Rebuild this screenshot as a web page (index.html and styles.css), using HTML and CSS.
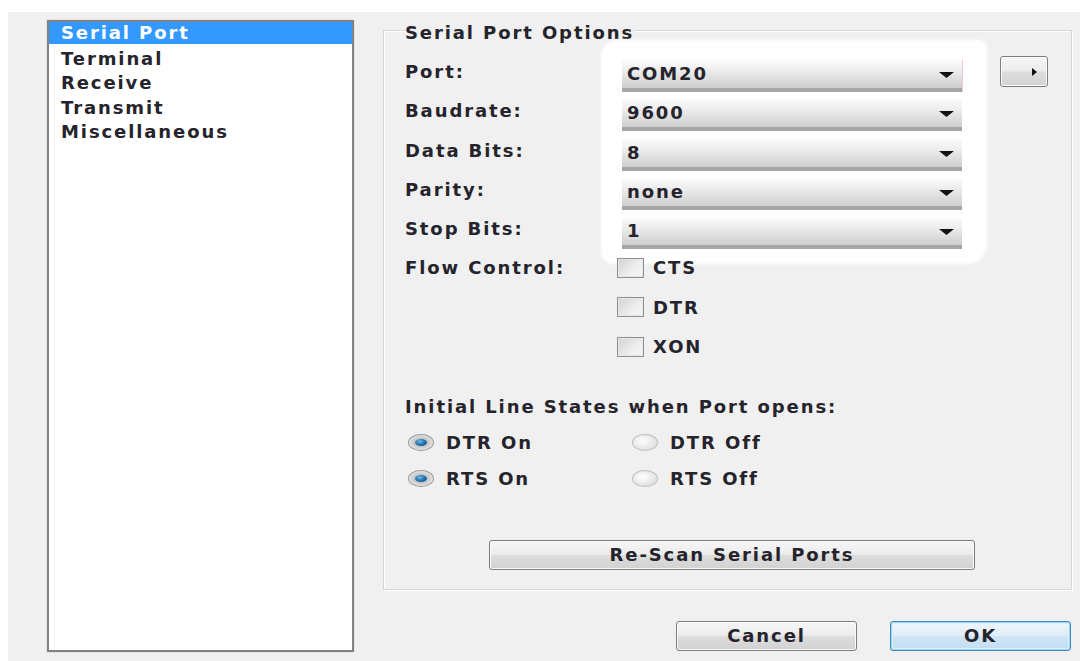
FILE: index.html
```html
<!DOCTYPE html>
<html lang="en">
<head>
<meta charset="utf-8">
<title>Settings</title>
<link rel="stylesheet" href="styles.css">
</head>
<body>
<div class="dialog">
  <ul class="pages">
    <li class="selected">Serial Port</li>
    <li>Terminal</li>
    <li>Receive</li>
    <li>Transmit</li>
    <li>Miscellaneous</li>
  </ul>

  <div class="main">
    <section class="group">
      <div class="group-title">Serial Port Options</div>

      <div class="form">
        <div class="labels">
          <div class="lbl">Port:</div>
          <div class="lbl">Baudrate:</div>
          <div class="lbl">Data Bits:</div>
          <div class="lbl">Parity:</div>
          <div class="lbl">Stop Bits:</div>
          <div class="lbl">Flow Control:</div>
        </div>

        <div class="fields">
          <div class="combos">
            <div class="row"><div class="combo first"><span>COM20</span><svg class="drop" width="15" height="6" viewBox="0 0 15 6"><path d="M0 0H15L7.5 6Z"/></svg></div></div>
            <div class="row"><div class="combo"><span>9600</span><svg class="drop" width="15" height="6" viewBox="0 0 15 6"><path d="M0 0H15L7.5 6Z"/></svg></div></div>
            <div class="row"><div class="combo"><span>8</span><svg class="drop" width="15" height="6" viewBox="0 0 15 6"><path d="M0 0H15L7.5 6Z"/></svg></div></div>
            <div class="row"><div class="combo"><span>none</span><svg class="drop" width="15" height="6" viewBox="0 0 15 6"><path d="M0 0H15L7.5 6Z"/></svg></div></div>
            <div class="row"><div class="combo"><span>1</span><svg class="drop" width="15" height="6" viewBox="0 0 15 6"><path d="M0 0H15L7.5 6Z"/></svg></div></div>
          </div>
          <div class="checks">
            <div class="row check"><span class="box"></span>CTS</div>
            <div class="row check"><span class="box"></span>DTR</div>
            <div class="row check"><span class="box"></span>XON</div>
          </div>
        </div>

        <div class="side">
          <button class="btn more" type="button"><svg width="5" height="8" viewBox="0 0 5 8"><path d="M0 0L5 4L0 8Z"/></svg></button>
        </div>
      </div>

      <div class="subtitle">Initial Line States when Port opens:</div>
      <div class="radios">
        <div class="radio-item"><span class="radio on"></span>DTR On</div>
        <div class="radio-item"><span class="radio"></span>DTR Off</div>
        <div class="radio-item"><span class="radio on"></span>RTS On</div>
        <div class="radio-item"><span class="radio"></span>RTS Off</div>
      </div>

      <button class="btn rescan" type="button">Re-Scan Serial Ports</button>
    </section>

    <div class="actions">
      <button class="btn action" type="button">Cancel</button>
      <button class="btn action default" type="button">OK</button>
    </div>
  </div>
</div>
</body>
</html>
```

FILE: styles.css
```css
html, body {
  margin: 0;
  background: #ffffff;
}

body {
  font-family: "DejaVu Sans", "Open Sans", sans-serif;
  font-weight: 700;
  font-size: 18px;
  letter-spacing: 1.9px;
  color: #25232b;
}

/* dialog surface */
.dialog {
  margin: 12px 0 0 8px;
  height: 649px;
  box-sizing: border-box;
  padding: 8px 8px 0 39px;
  background: #f0f0f0;
  display: flex;
  gap: 29px;
}

/* page list on the left */
.pages {
  list-style: none;
  margin: 0;
  padding: 0;
  width: 307px;
  height: 632px;
  box-sizing: border-box;
  border: 2px solid #828282;
  background: #ffffff;
  box-shadow: 0 0 1px #a8a8a8;
  flex: none;
}

.pages li {
  height: 24.5px;
  line-height: 23px;
  padding-left: 12px;
}

.pages li.selected {
  background: #3399ff;
  color: #ffffff;
  height: 22px;
  margin-bottom: 2.5px;
  line-height: 22px;
}

/* right column */
.main {
  width: 689px;
  display: flex;
  flex-direction: column;
  flex: none;
}

.group {
  margin-top: 10px;
  height: 560px;
  box-sizing: border-box;
  border: 1px solid #d6d6d6;
  box-shadow: inset 1px 1px 0 #ffffff, 1px 1px 0 #ffffff;
  padding: 0 0 19px 21px;
  display: flex;
  flex-direction: column;
  align-items: flex-start;
}

.group-title {
  margin-top: -10px;
  line-height: 24px;
  padding: 0 1px;
  margin-left: -1px;
  background: #f0f0f0;
}

.form {
  margin-top: 7px;
  display: flex;
}

.labels {
  width: 217px;
}

.lbl,
.row {
  height: 39.3px;
  line-height: 39.3px;
  box-sizing: border-box;
}

.fields {
  width: 340px;
}

/* white patch painted behind the drop-downs */
.combos {
  margin: -10px -23px -14px -19px;
  padding: 10px 23px 14px 19px;
  background: #ffffff;
  border-radius: 14px 6px 18px 10px;
  box-shadow: 0 0 3px 2px #ffffff;
}

.combos .row {
  padding-top: 8px;
}

.combo {
  height: 32px;
  box-sizing: border-box;
  padding: 2px 8px 0 5px;
  line-height: 24px;
  display: flex;
  justify-content: space-between;
  align-items: flex-start;
  background: linear-gradient(#fbfbfb, #eeeeee 35%, #dadada 75%, #cfcfcf);
  border-bottom: 4px solid #a6a6a6;
}

.combo.first {
  box-shadow: 1px 0 0 #f1c9c9;
}

.drop {
  margin-top: 10px;
  fill: #111111;
}

.checks {
  margin-left: -5px;
}

.check {
  display: flex;
  align-items: center;
  gap: 9px;
}

.box {
  width: 27px;
  height: 20px;
  box-sizing: border-box;
  border: 1px solid #8f8f8f;
  background: linear-gradient(135deg, #d2d2d2, #eeeeee 60%, #f7f7f7);
  box-shadow: inset 0 0 0 1px #e6e6e6;
}

.side {
  margin-left: 38px;
}

.btn {
  font: inherit;
  letter-spacing: inherit;
  color: inherit;
  border: 1px solid #7d7d7d;
  border-radius: 3px;
  background: linear-gradient(#f6f6f6, #ececec 48%, #dddddd 52%, #d2d2d2);
  box-shadow: inset 0 0 0 1px #fbfbfb;
  padding: 0;
  line-height: 26px;
}

.more {
  margin-top: 4px;
  width: 48px;
  height: 31px;
  display: flex;
  align-items: center;
  justify-content: flex-end;
  padding-right: 10px;
  box-sizing: border-box;
}

.more svg {
  fill: #111111;
}

.subtitle {
  margin-top: 29px;
  line-height: 24px;
}

.radios {
  margin-top: 5px;
  margin-left: 3px;
  display: grid;
  grid-template-columns: 224px auto;
  grid-auto-rows: 36px;
}

.radio-item {
  display: flex;
  align-items: center;
  gap: 12px;
}

.radio {
  position: relative;
  width: 26px;
  height: 17px;
  box-sizing: border-box;
  border-radius: 50%;
  border: 1px solid #bdbdbd;
  background: radial-gradient(ellipse at 40% 40%, #ffffff, #e2e2e2 70%, #d0d0d0);
}

.radio.on {
  border-color: #9a9a9a;
  background: radial-gradient(ellipse, #c6c6c6 40%, #e8e8e8 75%, #f2f2f2);
}

.radio.on::after {
  content: "";
  position: absolute;
  left: 6px;
  top: 4px;
  width: 12px;
  height: 7px;
  border-radius: 50%;
  background: radial-gradient(ellipse at 40% 35%, #6fb6e6, #1b6aa8 55%, #0f4678);
}

.rescan {
  margin-top: auto;
  margin-left: 84px;
  width: 486px;
  height: 30px;
}

.actions {
  margin-top: 31px;
  display: flex;
  justify-content: flex-end;
  gap: 33px;
  padding-right: 1px;
}

.action {
  width: 181px;
  height: 30px;
}

.default {
  border-color: #3c8bc4;
  background: linear-gradient(#eef6fc, #e0eef8 48%, #cfe5f4 52%, #c3def2);
  box-shadow: inset 0 0 0 1px #9fd4f5, inset 0 0 0 2px #d9effc;
}
```
